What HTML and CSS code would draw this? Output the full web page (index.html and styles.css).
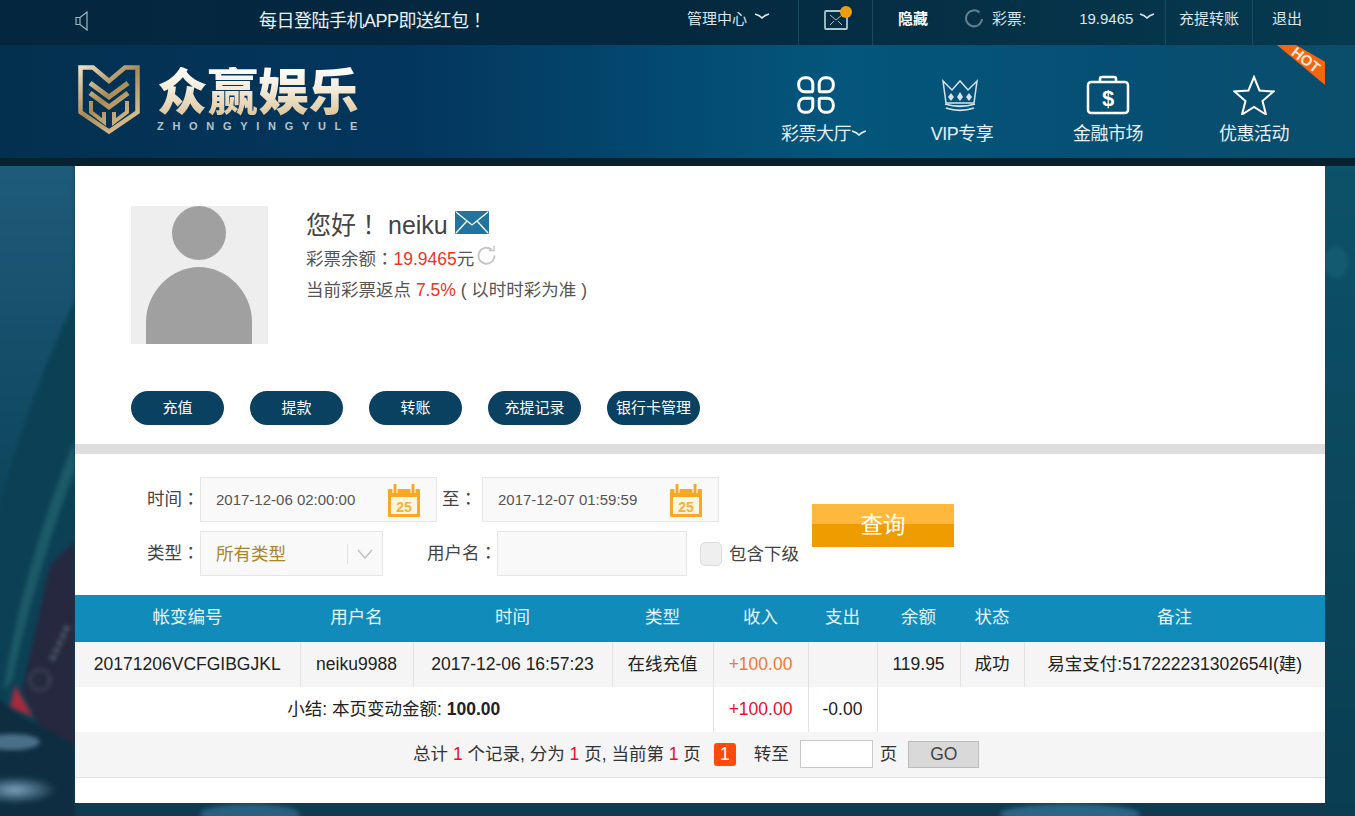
FILE: index.html
```html
<!DOCTYPE html>
<html lang="zh-CN">
<head>
    <meta charset="UTF-8">
    <meta name="viewport" content="width=device-width, initial-scale=1.0">
    <title>众赢娱乐</title>
    <link rel="stylesheet" href="styles.css">
</head>
<body>

    <!-- Page backdrop, only the edges show -->
    <svg class="backdrop" width="1375" height="836" viewBox="-10 -10 1375 836">
        <defs>
            <linearGradient id="bgTop" x1="0" y1="0" x2="0" y2="1">
                <stop offset="0" stop-color="#1f5b7b"/>
                <stop offset="0.6" stop-color="#124c66"/>
                <stop offset="1" stop-color="#0c4358"/>
            </linearGradient>
            <linearGradient id="bgRight" x1="0" y1="0" x2="0" y2="1">
                <stop offset="0" stop-color="#0d5269"/>
                <stop offset="1" stop-color="#0a3d51"/>
            </linearGradient>
            <radialGradient id="glow">
                <stop offset="0" stop-color="#7ba3bd"/>
                <stop offset="1" stop-color="#7ba3bd" stop-opacity="0"/>
            </radialGradient>
        </defs>
        <rect x="-10" y="-10" width="1375" height="836" fill="#0c4155"/>
        <rect x="1300" y="160" width="65" height="666" fill="url(#bgRight)"/>
        <ellipse cx="1336" cy="262" rx="12" ry="16" fill="#145a6f"/>
        <path d="M-10 160H75V300C50 350 15 440 -10 540z" fill="url(#bgTop)"/>
        <path d="M75 541L50 565L22 690L40 730L75 745z" fill="#25283e"/>
        <path d="M-10 700H0L20 715L75 745V826H-10z" fill="#0e2d40"/>
        <path d="M75 440V470C55 520 30 600 12 680L4 690C15 610 45 510 75 440z" fill="#1c5a68"/>
        <path d="M15 685L33 717L10 707z" fill="#a52a3f"/>
        <ellipse cx="12" cy="742" rx="28" ry="8" fill="#4a6f88"/>
        <circle cx="40" cy="680" r="10" fill="none" stroke="#4c5364" stroke-width="3" stroke-dasharray="3 2"/>
        <path d="M52 660L68 625" stroke="#4f5868" stroke-width="6" stroke-dasharray="5 3"/>
        <ellipse cx="15" cy="790" rx="42" ry="14" fill="url(#glow)"/>
        <rect x="75" y="803" width="1250" height="23" fill="#0f3a50"/>
        <ellipse cx="250" cy="814" rx="50" ry="10" fill="#2a5f80"/>
        <ellipse cx="1070" cy="814" rx="70" ry="10" fill="#2c6585"/>
    </svg>

    <!-- Top bar -->
    <div class="topbar">
        <div class="wrap topbar-inner">
            <svg class="speaker" width="14" height="20" viewBox="0 0 14 20" fill="none" stroke="#9fb4bf" stroke-width="1.2"><path d="M1 6.500h4v7H1zM5 6.500L12 1v18l-7-5.500"/></svg>
            <div class="notice">每日登陆手机APP即送红包<span class="fw" lang="zh-Hant">！</span></div>
            <div class="top-right">
                <div class="top-item item-manage">管理中心 <svg class="chev" width="16" height="6" viewBox="0 0 16 6" fill="none" stroke="#dbe6ea" stroke-width="1.500"><path d="M1 1Q6 2.500 8 5Q10 2.500 15 1"/></svg></div>
                <div class="top-item item-mail">
                    <svg width="32" height="26" viewBox="0 0 32 26" fill="none" stroke="#a9c3cf" stroke-width="1.800"><rect x="5" y="5" width="22" height="18" rx="1"/><path d="M10 9l6 5 6-5M10 19l4-4M22 19l-4-4" stroke-width="1"/><circle cx="26" cy="6" r="6" fill="#f09d0d" stroke="none"/></svg>
                </div>
                <div class="top-item item-hide">隐藏</div>
                <div class="top-item item-balance">
                    <svg class="top-refresh" width="20" height="20" viewBox="0 0 20 20" fill="none" stroke="#62808e" stroke-width="2"><path d="M15.500 3.500A8 8 0 1 0 18 10"/></svg>
                    <span class="balance-label">彩票:</span>
                    <span class="balance-num">19.9465</span>
                    <svg class="chev" width="16" height="6" viewBox="0 0 16 6" fill="none" stroke="#dbe6ea" stroke-width="1.500"><path d="M1 1Q6 2.500 8 5Q10 2.500 15 1"/></svg>
                </div>
                <div class="top-item item-transfer">充提转账</div>
                <div class="top-item item-exit">退出</div>
            </div>
        </div>
    </div>

    <!-- Logo and main nav -->
    <div class="header">
        <div class="wrap header-inner">
            <div class="logo">
                <svg width="62" height="70" viewBox="0 0 62 70" fill="none" stroke="url(#gold)">
                    <defs>
                        <linearGradient id="gold" gradientUnits="userSpaceOnUse" x1="0" y1="0" x2="62" y2="70">
                            <stop offset="0" stop-color="#f2e6cd"/>
                            <stop offset="0.45" stop-color="#a98a55"/>
                            <stop offset="1" stop-color="#ecd7aa"/>
                        </linearGradient>
                    </defs>
                    <path d="M2.500 2.500H15L31 16L47 2.500H59.500V47L31 66.500L2.500 47z" stroke-width="4.500"/>
                    <path d="M12 18L31 32L50 18M12 28L31 42L50 28" stroke-width="5"/>
                    <path d="M13 36V47L26 57V47M49 36V47L36 57V47" stroke-width="4"/>
                </svg>
                <div class="logo-text">
                    <div class="logo-name">众赢娱乐</div>
                    <div class="logo-sub">ZHONGYINGYULE</div>
                </div>
            </div>
            <div class="main-nav">
                <div class="nav-item">
                    <svg class="nav-icon" width="40" height="40" viewBox="0 0 40 40" fill="none" stroke="#fff" stroke-width="3">
                        <path id="petal" d="M8.700 2.700H10.800A6 6 0 0 1 16.800 8.700V15.300A1.500 1.500 0 0 1 15.300 16.800H8.700A6 6 0 0 1 2.700 10.800V8.700A6 6 0 0 1 8.700 2.700z"/>
                        <use href="#petal" transform="translate(40 0) scale(-1 1)"/>
                        <use href="#petal" transform="translate(0 40) scale(1 -1)"/>
                        <use href="#petal" transform="translate(40 40) scale(-1 -1)"/>
                    </svg>
                    <div class="nav-label">彩票大厅<svg class="chev-small" width="16" height="6" viewBox="0 0 16 6" fill="none" stroke="#e6f0f4" stroke-width="1.500"><path d="M1 1Q6 2.500 8 5Q10 2.500 15 1"/></svg></div>
                </div>
                <div class="nav-item">
                    <svg class="nav-icon" width="40" height="40" viewBox="2 0 40 40" fill="none" stroke="#d5e3ea" stroke-width="1.500">
                        <path d="M3 6L12 15L20 6L28 15L37 6L34 28H6z"/>
                        <path d="M8 22l3-4 3 4-3 4zM17 22l3-5 3 5-3 4zM26 22l3-4 3 4-3 4z" fill="#d5e3ea" stroke="none"/>
                        <path d="M5 29c10 3 20 3 30 0M6 33c9 3 19 3 28 0" stroke-width="1.800"/>
                    </svg>
                    <div class="nav-label">VIP专享</div>
                </div>
                <div class="nav-item">
                    <svg class="nav-icon" width="44" height="40" viewBox="0 0 44 40" fill="none" stroke="#fff" stroke-width="2.500">
                        <rect x="2" y="7" width="40" height="31" rx="3"/>
                        <path d="M14 7V4a2 2 0 0 1 2-2h12a2 2 0 0 1 2 2v3"/>
                        <text x="22" y="31" font-size="22" font-weight="bold" font-family="Liberation Sans" fill="#fff" stroke="none" text-anchor="middle">$</text>
                    </svg>
                    <div class="nav-label">金融市场</div>
                </div>
                <div class="nav-item">
                    <svg class="nav-icon" width="42" height="40" viewBox="0 0 42 40" fill="none" stroke="#fff" stroke-width="2">
                        <path d="M21 2l5.500 13.500 14 1-11 9.500 3.500 13.500L21 32l-12 7.500L12.500 26l-11-9.500 14-1z"/>
                    </svg>
                    <div class="nav-label">优惠活动</div>
                </div>
                <div class="hot"><span>HOT</span></div>
            </div>
        </div>
    </div>
    <div class="header-shadow"></div>

    <div class="wrap content">

        <!-- Account info -->
        <div class="profile">
            <svg class="avatar" width="137" height="138" viewBox="0 0 137 138">
                <rect width="137" height="138" fill="#eee"/>
                <ellipse cx="68" cy="27" rx="27" ry="27" fill="#a0a0a0"/>
                <path d="M15 138V116C15 86 40 61 68 61s53 25 53 55v22z" fill="#a0a0a0"/>
            </svg>
            <div class="profile-info">
                <div class="greeting">
                    <span>您好<span class="fw" lang="zh-Hant">！</span> neiku</span>
                    <svg class="mail-icon" width="34" height="23" viewBox="0 0 34 23"><rect width="34" height="23" rx="1" fill="#23739f"/><path d="M1 1l16 13L33 1M1 22l11-12M33 22L22 10" fill="none" stroke="#fff" stroke-width="1.300"/></svg>
                </div>
                <div class="info-line">彩票余额<span class="fw" lang="zh-Hant">：</span><span class="red">19.9465</span>元<svg class="refresh" width="19" height="19" viewBox="0 0 19 19" fill="none" stroke="#c4c4c4" stroke-width="1.800"><path d="M14.500 3.500A8 8 0 1 0 17.500 9.500"/><path d="M12 4.500h5V0" stroke-width="1.400"/></svg></div>
                <div class="info-line">当前彩票返点 <span class="red">7.5%</span> ( 以时时彩为准 )</div>
            </div>
        </div>

        <div class="actions">
            <a class="action-btn">充值</a>
            <a class="action-btn">提款</a>
            <a class="action-btn">转账</a>
            <a class="action-btn">充提记录</a>
            <a class="action-btn">银行卡管理</a>
        </div>

        <div class="divider"></div>

        <!-- Search form -->
        <div class="filter">
            <div class="filter-rows">
                <div class="filter-row">
                    <label class="label-type">时间<span class="fw" lang="zh-Hant">：</span></label>
                    <div class="field date-field">
                        2017-12-06 02:00:00
                        <svg class="cal" width="34" height="34" viewBox="0 0 34 34"><rect x="1" y="5" width="32" height="28" rx="1" fill="#f9a825"/><rect x="4" y="13" width="26" height="17" fill="#fff6df"/><path d="M8 1v8M26 1v8" stroke="#fff" stroke-width="5"/><path d="M8 1v8M26 1v8" stroke="#f9a825" stroke-width="3" stroke-linecap="round"/><text x="17" y="28" font-size="14" font-weight="bold" font-family="Liberation Sans" fill="#f3b13c" text-anchor="middle">25</text></svg>
                    </div>
                    <label class="label-to">至<span class="fw" lang="zh-Hant">：</span></label>
                    <div class="field date-field">
                        2017-12-07 01:59:59
                        <svg class="cal" width="34" height="34" viewBox="0 0 34 34"><rect x="1" y="5" width="32" height="28" rx="1" fill="#f9a825"/><rect x="4" y="13" width="26" height="17" fill="#fff6df"/><path d="M8 1v8M26 1v8" stroke="#fff" stroke-width="5"/><path d="M8 1v8M26 1v8" stroke="#f9a825" stroke-width="3" stroke-linecap="round"/><text x="17" y="28" font-size="14" font-weight="bold" font-family="Liberation Sans" fill="#f3b13c" text-anchor="middle">25</text></svg>
                    </div>
                </div>
                <div class="filter-row">
                    <label class="label-type">类型<span class="fw" lang="zh-Hant">：</span></label>
                    <div class="field select-field">
                        <span>所有类型</span>
                        <svg class="select-arrow" width="36" height="24" viewBox="0 0 36 24" fill="none"><path d="M0.500 2v20" stroke="#e2e2e2"/><path d="M11 8l7 8 7-8" stroke="#bbb" stroke-width="1.200"/></svg>
                    </div>
                    <label class="label-user">用户名<span class="fw" lang="zh-Hant">：</span></label>
                    <input class="field user-input" type="text">
                    <span class="check"></span>
                    <span class="check-label">包含下级</span>
                </div>
            </div>
            <button class="search-btn">查询</button>
        </div>

        <!-- Transactions -->
        <table class="records">
            <colgroup>
                <col class="c1"><col class="c2"><col class="c3"><col class="c4"><col class="c5"><col class="c6"><col class="c7"><col class="c8"><col class="c9">
            </colgroup>
            <thead>
                <tr>
                    <th>帐变编号</th>
                    <th>用户名</th>
                    <th>时间</th>
                    <th>类型</th>
                    <th>收入</th>
                    <th>支出</th>
                    <th>余额</th>
                    <th>状态</th>
                    <th>备注</th>
                </tr>
            </thead>
            <tbody>
                <tr class="row-data">
                    <td>20171206VCFGIBGJKL</td>
                    <td>neiku9988</td>
                    <td>2017-12-06 16:57:23</td>
                    <td>在线充值</td>
                    <td class="orange">+100.00</td>
                    <td></td>
                    <td>119.95</td>
                    <td>成功</td>
                    <td>易宝支付:517222231302654I(建)</td>
                </tr>
                <tr class="row-sum">
                    <td colspan="4">小结: 本页变动金额: <b>100.00</b></td>
                    <td class="crimson">+100.00</td>
                    <td>-0.00</td>
                    <td colspan="3"></td>
                </tr>
                <tr class="row-pager">
                    <td colspan="9">
                        <div class="pager">
                            <span>总计 <i>1</i> 个记录, 分为 <i>1</i> 页, 当前第 <i>1</i> 页</span>
                            <span class="page-num">1</span>
                            <span class="goto">转至</span>
                            <input class="page-input" type="text">
                            <span class="page-word">页</span>
                            <button class="go-btn">GO</button>
                        </div>
                    </td>
                </tr>
            </tbody>
        </table>
    </div>

</body>
</html>
```

FILE: styles.css
```css
* {
    box-sizing: border-box;
}
html, body {
    height: 816px;
    overflow: hidden;
}
body {
    margin: 0;
    font-family: "Liberation Sans", "Noto Sans CJK SC", sans-serif;
    color: #333;
    background-color: #0c4155;
}
.backdrop {
    position: absolute;
    top: -10px;
    left: -10px;
    z-index: -1;
    filter: blur(2px);
}
.wrap {
    width: 1250px;
    margin-left: 75px;
}
/* full-width punctuation sits centred in the TC font */
.fw {
    font-family: "Noto Sans CJK TC", sans-serif;
}

/* top bar */
.topbar {
    height: 45px;
    background: linear-gradient(90deg, #05263f 0%, #04293f 50%, #063a4f 100%);
    color: #fff;
}
.topbar-inner {
    display: flex;
    align-items: center;
    height: 45px;
}
.speaker {
    flex: none;
    margin-bottom: 4px;
}
.notice {
    margin-left: 170px;
    font-size: 18px;
    line-height: 24px;
    letter-spacing: -0.500px;
    margin-bottom: 6px;
    color: #e9f1f4;
}
.top-right {
    display: flex;
    margin-left: auto;
    height: 45px;
    font-size: 15px;
    line-height: 20px;
    color: #dbe6ea;
}
.top-item {
    display: flex;
    align-items: center;
    padding-bottom: 8px;
    border-right: 1px solid #1b4a60;
}
.item-manage {
    width: 112px;
    gap: 7px;
}
.item-mail {
    width: 74px;
    justify-content: center;
}
.item-hide {
    width: 85px;
    border-right: none;
    padding-left: 25px;
    font-weight: bold;
    color: #fff;
}
.item-balance {
    width: 208px;
    padding-left: 6px;
}
.top-refresh {
    flex: none;
}
.balance-label {
    margin-left: 8px;
}
.balance-num {
    margin-left: 53px;
    margin-right: 6px;
}
.item-transfer {
    width: 87px;
    justify-content: center;
}
.item-exit {
    width: 72px;
    padding-left: 19px;
    border-right: none;
}
.chev {
    flex: none;
    margin-bottom: 5px;
}

/* logo and main nav */
.header {
    height: 113px;
    background: linear-gradient(90deg, #04304f 0%, #03365e 30%, #04567c 62%, #064f74 82%, #0a4d6b 100%);
}
.header-inner {
    display: flex;
    height: 113px;
}
.logo {
    display: flex;
    margin-left: 3px;
    padding-top: 20px;
}
.logo-text {
    margin-left: 17px;
}
.logo-name {
    height: 51px;
    font-size: 50.500px;
    line-height: 52px;
    font-weight: 900;
    margin-top: 2px;
    background: linear-gradient(180deg, #fff 0%, #f3ead8 45%, #dcc296 100%);
    -webkit-background-clip: text;
    background-clip: text;
    color: transparent;
}
.logo-sub {
    margin-top: 2px;
    font-size: 11px;
    line-height: 12px;
    font-weight: bold;
    letter-spacing: 8.700px;
    white-space: nowrap;
    color: #b5c4cc;
}
.main-nav {
    position: relative;
    display: flex;
    margin-left: auto;
    width: 582px;
}
.nav-item {
    flex: none;
    width: 146px;
    display: flex;
    flex-direction: column;
    align-items: center;
    padding-top: 30px;
    color: #e6f0f4;
}
.nav-label {
    margin-top: 8px;
    font-size: 18px;
    line-height: 22px;
    letter-spacing: -0.500px;
    white-space: nowrap;
}
.chev-small {
    margin-right: -16px;
    vertical-align: 4px;
}
.hot {
    position: absolute;
    top: 0;
    right: 0;
    width: 50px;
    height: 40px;
}
.hot::before {
    content: "";
    position: absolute;
    inset: 0;
    background: #f5640f;
    clip-path: polygon(4% 0, 42% 0, 100% 42%, 100% 100%);
}
.hot span {
    position: absolute;
    top: 6px;
    left: 15px;
    font-size: 15px;
    line-height: 18px;
    font-weight: bold;
    color: #ffe6d8;
    transform: rotate(38deg);
}
.header-shadow {
    height: 8px;
    background: #06222f;
}

/* page body */
.content {
    height: 637px;
    background: #fff;
}
.profile {
    display: flex;
    padding: 40px 0 0 56px;
    height: 225px;
}
.avatar {
    flex: none;
}
.profile-info {
    margin-left: 38px;
}
.greeting {
    display: flex;
    align-items: center;
    gap: 7px;
    height: 36px;
    font-size: 25px;
    line-height: 36px;
    color: #444;
}
.mail-icon {
    margin-top: -4px;
}
.info-line {
    font-size: 17.500px;
    line-height: 31px;
    white-space: nowrap;
    color: #555;
}
.red {
    color: #f2321c;
}
.refresh {
    margin-left: 3px;
}
.actions {
    display: flex;
    gap: 26px;
    padding-left: 56px;
}
.action-btn {
    width: 93px;
    height: 34px;
    line-height: 34px;
    border-radius: 17px;
    background: #0a4060;
    color: #fff;
    font-size: 15px;
    text-align: center;
}
.divider {
    height: 10px;
    margin-top: 19px;
    background: #dedede;
}

/* search form */
.filter {
    display: flex;
    align-items: flex-start;
    height: 141px;
    padding-top: 23px;
}
.filter-rows {
    flex: none;
    width: 737px;
}
.filter-row {
    display: flex;
    align-items: center;
    height: 45px;
    margin-bottom: 9px;
    font-size: 17.500px;
    line-height: 22px;
    color: #444;
}
.label-type {
    width: 125px;
    padding-left: 72px;
    padding-bottom: 3px;
    white-space: nowrap;
}
.label-to {
    width: 45px;
    padding-left: 5px;
    padding-bottom: 3px;
    white-space: nowrap;
}
.label-user {
    width: 114px;
    padding-bottom: 3px;
    text-align: right;
    white-space: nowrap;
}
.field {
    height: 45px;
    background: #f9f9f9;
    border: 1px solid #e6e6e6;
}
.date-field {
    position: relative;
    display: flex;
    align-items: center;
    width: 237px;
    padding-left: 15px;
    font-size: 15px;
    color: #555;
}
.cal {
    position: absolute;
    top: 6px;
    right: 15px;
}
.select-field {
    display: flex;
    align-items: center;
    width: 183px;
    padding-left: 15px;
    color: #a9842b;
}
.select-arrow {
    margin-left: auto;
    margin-right: -1px;
}
.user-input {
    width: 190px;
}
.check {
    width: 22px;
    height: 24px;
    margin-left: 13px;
    border: 1px solid #ddd;
    border-radius: 5px;
    background: #efefef;
}
.check-label {
    margin-left: 7px;
    white-space: nowrap;
}
.search-btn {
    flex: none;
    width: 142px;
    height: 43px;
    margin-top: 27px;
    border: none;
    padding: 0;
    background: linear-gradient(180deg, #fdb83d 0 47%, #ee9c00 47%);
    color: #fff;
    font-family: inherit;
    font-size: 22.500px;
    line-height: 26px;
}

/* table */
.records {
    width: 1250px;
    table-layout: fixed;
    border-collapse: collapse;
    font-size: 17.500px;
    line-height: 22px;
    color: #333;
    text-align: center;
}
.c1 { width: 225px; }
.c2 { width: 113px; }
.c3 { width: 199px; }
.c4 { width: 101px; }
.c5 { width: 95px; }
.c6 { width: 69px; }
.c7 { width: 83px; }
.c8 { width: 64px; }
.c9 { width: 301px; }
th {
    height: 47px;
    padding: 0 0 4px;
    background: #118cba;
    color: #e8f5fa;
    font-weight: normal;
}
td {
    height: 45px;
    padding: 0 0 2px;
    white-space: nowrap;
    border-right: 1px solid #e2e2e2;
}
td:last-child {
    border-right: none;
}
.row-data td {
    background: #f5f5f6;
    color: #222;
}
.row-data .orange {
    color: #ee7b33;
}
.row-sum td {
    color: #222;
}
.row-sum .crimson {
    color: #e60f2c;
}
.row-pager td {
    padding: 0;
    background: #f5f5f6;
    border-bottom: 1px solid #e2e2e2;
}
.pager {
    display: flex;
    align-items: center;
    justify-content: flex-start;
    padding-left: 338px;
    color: #333;
}
.pager i {
    font-style: normal;
    color: #e60f2c;
}
.page-num {
    width: 22px;
    height: 23px;
    line-height: 23px;
    margin-left: 13px;
    border-radius: 3px;
    background: #ff4a0a;
    color: #fff;
}
.goto {
    margin-left: 18px;
}
.page-input {
    width: 73px;
    height: 28px;
    margin-left: 11px;
    border: 1px solid #c9c9c9;
    background: #fff;
}
.page-word {
    margin-left: 7px;
}
.go-btn {
    width: 71px;
    height: 27px;
    margin-left: 11px;
    padding: 0;
    border: 1px solid #bbb;
    background: #d9d9d9;
    color: #444;
    font-family: inherit;
    font-size: 17.500px;
}
```
